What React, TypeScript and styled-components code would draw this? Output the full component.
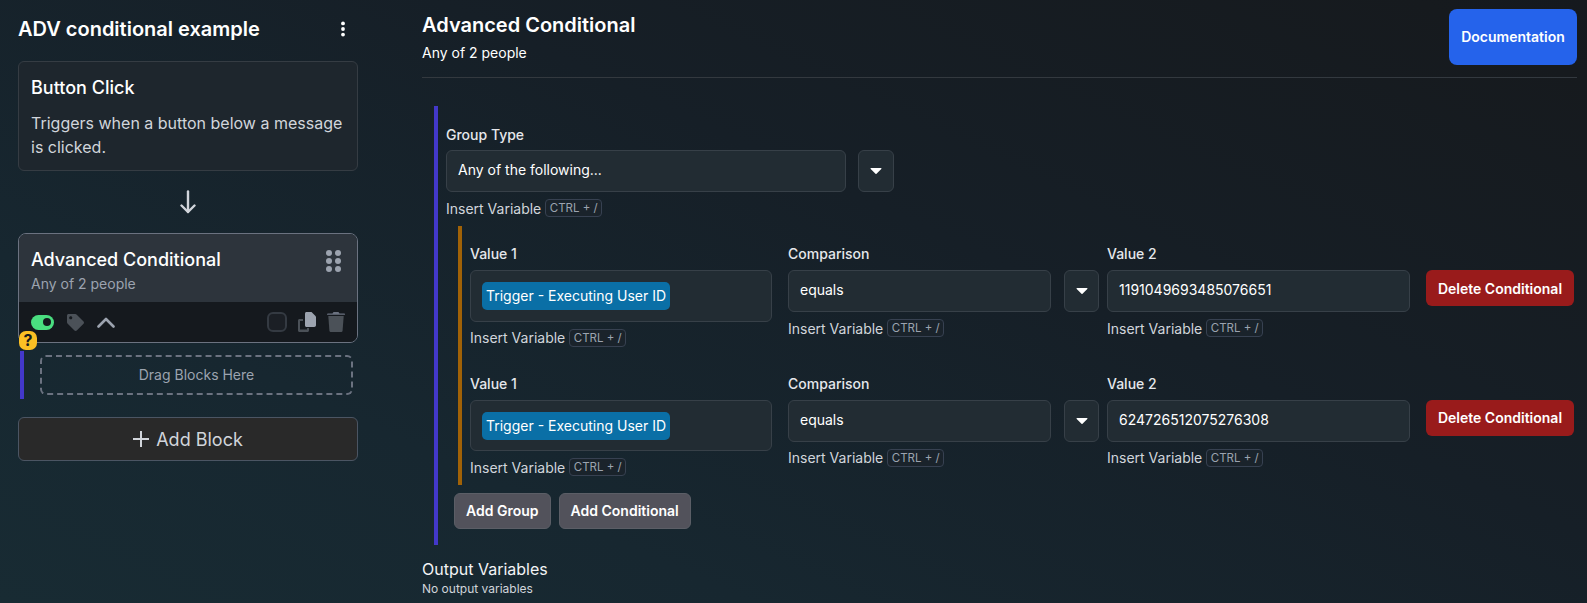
import React from 'react';
import styled, { createGlobalStyle } from 'styled-components';
import { FaTag } from 'react-icons/fa';

const GlobalStyle = createGlobalStyle`
  html, body {
    margin: 0;
    padding: 0;
    height: 100%;
    overflow: hidden;
  }
  body {
    font-family: Inter, "Liberation Sans", sans-serif;
    color: #fff;
    background: #171f26;
  }
  * {
    box-sizing: border-box;
  }
`;

const CaretIcon = () => (
  <svg width="12" height="8" viewBox="0 0 12 8">
    <path d="M1.2 1h9.6c.6 0 .9.7.5 1.1L6.5 6.8c-.3.3-.7.3-1 0L.7 2.1C.3 1.7.6 1 1.2 1z" fill="#fff" />
  </svg>
);

const InsertVariable = () => (
  <InsertRow>
    Insert Variable
    <Kbd>CTRL + /</Kbd>
  </InsertRow>
);

const ConditionalRow = ({ value }: { value: string }) => (
  <Row>
    <ValueOneField>
      <FieldLabel>Value 1</FieldLabel>
      <ChipInput>
        <Chip>Trigger - Executing User ID</Chip>
      </ChipInput>
      <InsertVariable />
    </ValueOneField>
    <ComparisonField>
      <FieldLabel>Comparison</FieldLabel>
      <SelectRow>
        <SelectBox>equals</SelectBox>
        <CaretButton>
          <CaretIcon />
        </CaretButton>
      </SelectRow>
      <InsertVariable />
    </ComparisonField>
    <ValueTwoField>
      <FieldLabel>Value 2</FieldLabel>
      <SelectBox>{value}</SelectBox>
      <InsertVariable />
    </ValueTwoField>
    <DeleteButton>Delete Conditional</DeleteButton>
  </Row>
);

const App = () => {
  return (
    <Page>
      <GlobalStyle />
      <Sidebar>
        <SidebarHeader>
          <SidebarTitle>ADV conditional example</SidebarTitle>
          <svg width="4" height="16" viewBox="0 0 4 16">
            <circle cx="2" cy="2.4" r="1.9" fill="#fff" />
            <circle cx="2" cy="8" r="1.9" fill="#fff" />
            <circle cx="2" cy="13.6" r="1.9" fill="#fff" />
          </svg>
        </SidebarHeader>
        <TriggerCard>
          <TriggerTitle>Button Click</TriggerTitle>
          <TriggerText>Triggers when a button below a message is clicked.</TriggerText>
        </TriggerCard>
        <ArrowWrap>
          <svg width="16" height="24" viewBox="0 0 16 24" fill="none" stroke="#d1d5db" strokeWidth="2.4" strokeLinecap="round" strokeLinejoin="round">
            <path d="M8 1.5v20.5" />
            <path d="M1.5 15.5 8 22l6.500-6.500" />
          </svg>
        </ArrowWrap>
        <BlockCard>
          <BlockHead>
            <BlockHeadText>
              <BlockTitle>Advanced Conditional</BlockTitle>
              <BlockSub>Any of 2 people</BlockSub>
            </BlockHeadText>
            <svg width="15" height="22" viewBox="0 0 15 22" fill="#9ca3af">
              <circle cx="3" cy="3" r="3" />
              <circle cx="12" cy="3" r="3" />
              <circle cx="3" cy="11" r="3" />
              <circle cx="12" cy="11" r="3" />
              <circle cx="3" cy="19" r="3" />
              <circle cx="12" cy="19" r="3" />
            </svg>
          </BlockHead>
          <BlockFoot>
            <Toggle />
            <FaTag size={17} color="#4b5158" />
            <svg width="18" height="11" viewBox="0 0 18 11" fill="none" stroke="#9ca3af" strokeWidth="2.6" strokeLinecap="round" strokeLinejoin="round">
              <path d="M1.500 9.500 9 2l7.500 7.500" />
            </svg>
            <FootRight>
              <CheckBox />
              <svg width="18" height="20" viewBox="0 0 18 20">
                <path d="M0 8.500C0 7.700.7 7 1.500 7H5v2H2v8.500h7V16h2v2.500c0 .8-.7 1.500-1.500 1.500h-8C.7 20 0 19.300 0 18.500z" fill="#4b5158" />
                <path d="M7 1.500C7 .7 7.700 0 8.500 0h5L18 4.500V13c0 1-.7 2-1.800 2H8.500c-.8 0-1.500-.7-1.500-1.500z" fill="#9ca3af" />
              </svg>
              <svg width="18" height="20" viewBox="0 0 18 20">
                <path d="M6.500 0h5l1 1.400H17c.6 0 1 .4 1 .9v.5H0v-.5c0-.5.4-.9 1-.9h4.500z" fill="#6b7280" />
                <path d="M1.300 4h15.400L15.600 18.400c-.1.9-.8 1.600-1.700 1.600H4.100c-.9 0-1.600-.7-1.700-1.600z" fill="#4b5158" />
              </svg>
            </FootRight>
          </BlockFoot>
          <HelpBadge>?</HelpBadge>
        </BlockCard>
        <Branch>
          <DropZone>Drag Blocks Here</DropZone>
        </Branch>
        <AddBlock>
          <svg width="16" height="16" viewBox="0 0 16 16" stroke="#d1d5db" strokeWidth="2">
            <path d="M8 0v16M0 8h16" />
          </svg>
          Add Block
        </AddBlock>
      </Sidebar>
      <Main>
        <MainHeader>
          <div>
            <MainTitle>Advanced Conditional</MainTitle>
            <MainSub>Any of 2 people</MainSub>
          </div>
          <DocsButton>Documentation</DocsButton>
        </MainHeader>
        <GroupBlock>
          <GroupLabel>Group Type</GroupLabel>
          <GroupSelectRow>
            <SelectBox>Any of the following...</SelectBox>
            <GroupCaretButton>
              <CaretIcon />
            </GroupCaretButton>
          </GroupSelectRow>
          <InsertVariable />
          <ConditionalList>
            <ConditionalRow value="1191049693485076651" />
            <ConditionalRow value="624726512075276308" />
          </ConditionalList>
          <GroupActions>
            <GrayButton>Add Group</GrayButton>
            <GrayButton>Add Conditional</GrayButton>
          </GroupActions>
        </GroupBlock>
        <OutputTitle>Output Variables</OutputTitle>
        <OutputText>No output variables</OutputText>
      </Main>
    </Page>
  );
};

export default App;

const Page = styled.div`
  display: flex;
  height: 603px;
  overflow: hidden;
  background: linear-gradient(25deg, #182b33 0%, #172730 26%, #161f27 60%, #161a1e 94%, #15191e 100%);
`;

const Sidebar = styled.div`
  width: 422px;
  flex-shrink: 0;
  padding: 15px 64px 0 18px;
`;

const SidebarHeader = styled.div`
  display: flex;
  align-items: center;
  justify-content: space-between;
  height: 28px;
  padding-right: 13px;
  margin-bottom: 18px;
`;

const SidebarTitle = styled.div`
  font-size: 20px;
  line-height: 28px;
  font-weight: 600;
`;

const TriggerCard = styled.div`
  height: 110px;
  padding: 12px;
  border: 1px solid #353c43;
  border-radius: 6px;
  background: #1e262d;
`;

const TriggerTitle = styled.div`
  font-size: 18px;
  line-height: 28px;
  font-weight: 500;
  margin-bottom: 9px;
`;

const TriggerText = styled.div`
  font-size: 16px;
  line-height: 24px;
  color: #d1d5db;
`;

const ArrowWrap = styled.div`
  display: flex;
  justify-content: center;
  padding: 19px 0 19px;
  height: 62px;
`;

const BlockCard = styled.div`
  position: relative;
  height: 110px;
  border: 1px solid #6b7280;
  border-radius: 8px;
  display: flex;
  flex-direction: column;
`;

const BlockHead = styled.div`
  display: flex;
  justify-content: space-between;
  height: 68px;
  padding: 12px 16px 0 12px;
  background: #2d343c;
  border-radius: 7px 7px 0 0;

  svg {
    margin-top: 4px;
  }
`;

const BlockHeadText = styled.div`
  display: flex;
  flex-direction: column;
`;

const BlockTitle = styled.div`
  font-size: 18px;
  line-height: 28px;
  font-weight: 500;
`;

const BlockSub = styled.div`
  font-size: 14px;
  line-height: 20px;
  color: #9ca3af;
`;

const BlockFoot = styled.div`
  flex: 1;
  display: flex;
  align-items: center;
  gap: 13px;
  padding: 0 12px;
  background: #15191e;
  border-radius: 0 0 7px 7px;
`;

const FootRight = styled.div`
  display: flex;
  align-items: center;
  gap: 11px;
  margin-left: auto;
`;

const Toggle = styled.div`
  position: relative;
  width: 23px;
  height: 15px;
  border-radius: 8px;
  background: #4ade80;

  &::after {
    content: '';
    position: absolute;
    right: 3px;
    top: 3.5px;
    width: 8px;
    height: 8px;
    border-radius: 50%;
    background: #15191e;
  }
`;

const CheckBox = styled.div`
  width: 20px;
  height: 20px;
  border: 2px solid #343a42;
  border-radius: 6px;
  background: #1b1f25;
`;

const HelpBadge = styled.div`
  position: absolute;
  left: 0;
  top: 97px;
  width: 18px;
  height: 19px;
  border-radius: 7px;
  background: #fbbf24;
  color: #15191e;
  font-size: 16px;
  font-weight: 700;
  line-height: 19px;
  text-align: center;
`;

const Branch = styled.div`
  margin: 8px 0 0 2px;
  padding: 4px 5px 4px 16px;
  border-left: 4px solid #4338ca;
`;

const DropZone = styled.div`
  height: 40px;
  padding-bottom: 2px;
  border: 2px dashed #6b7280;
  border-radius: 6px;
  display: flex;
  align-items: center;
  justify-content: center;
  font-size: 14px;
  color: #9ca3af;
`;

const AddBlock = styled.div`
  margin-top: 18px;
  height: 44px;
  border: 1px solid #4b5563;
  border-radius: 6px;
  background: #292929;
  display: flex;
  align-items: center;
  justify-content: center;
  gap: 7px;
  font-size: 18px;
  color: #d1d5db;
`;

const Main = styled.div`
  flex: 1;
  min-width: 0;
  padding: 9px 10px 0 0;
`;

const MainHeader = styled.div`
  display: flex;
  justify-content: space-between;
  height: 69px;
  padding-top: 0;
  border-bottom: 1px solid #33393f;
`;

const MainTitle = styled.div`
  font-size: 20px;
  line-height: 28px;
  font-weight: 600;
  margin-top: 2px;
`;

const MainSub = styled.div`
  font-size: 14px;
  line-height: 20px;
  margin-top: 4px;
`;

const DocsButton = styled.div`
  width: 128px;
  height: 56px;
  padding-bottom: 2px;
  border-radius: 8px;
  background: #2563eb;
  display: flex;
  align-items: center;
  justify-content: center;
  font-size: 14px;
  font-weight: 600;
`;

const GroupBlock = styled.div`
  margin: 28px 0 0 12px;
  padding: 18px 0 16px 8px;
  border-left: 4px solid #4338ca;
`;

const FieldLabel = styled.div`
  font-size: 14px;
  line-height: 20px;
  font-weight: 500;
  color: #e5e7eb;
  margin-bottom: 6px;
`;

const GroupLabel = styled(FieldLabel)`
  padding-top: 1px;
  margin-bottom: 5px;
`;

const SelectBox = styled.div`
  flex: 1;
  height: 42px;
  padding: 0 11px 3px;
  border: 1px solid #374048;
  border-radius: 6px;
  background: #222c33;
  display: flex;
  align-items: center;
  font-size: 14px;
  color: #fff;
`;

const CaretButton = styled.div`
  width: 35px;
  height: 42px;
  flex-shrink: 0;
  border: 1px solid #374048;
  border-radius: 6px;
  background: #222c33;
  display: flex;
  align-items: center;
  justify-content: center;
`;

const GroupCaretButton = styled(CaretButton)`
  width: 36px;
`;

const GroupSelectRow = styled.div`
  display: flex;
  gap: 12px;
  width: 448px;
`;

const SelectRow = styled.div`
  display: flex;
  gap: 13px;
`;

const InsertRow = styled.div`
  display: flex;
  align-items: center;
  gap: 4px;
  height: 18px;
  margin-top: 7px;
  font-size: 14px;
  color: #d1d5db;
`;

const Kbd = styled.span`
  height: 18px;
  padding: 0 3.5px;
  border: 1px solid #374151;
  border-radius: 4px;
  background: #1a232b;
  font-size: 11.5px;
  line-height: 16px;
  color: #9ca3af;
`;

const ConditionalList = styled.div`
  display: flex;
  flex-direction: column;
  gap: 27px;
  margin: 9px 0 0 12px;
  padding: 18px 0 9px 8px;
  border-left: 4px solid #a16207;
`;

const Row = styled.div`
  display: flex;
  align-items: flex-start;
`;

const ValueOneField = styled.div`
  width: 302px;
  margin-right: 16px;
`;

const ComparisonField = styled.div`
  width: 311px;
  margin-right: 8px;
`;

const ValueTwoField = styled.div`
  width: 303px;
  margin-right: 16px;
`;

const ChipInput = styled.div`
  height: 51.5px;
  padding: 11px;
  border: 1px solid #374048;
  border-radius: 6px;
  background: #222c33;
`;

const Chip = styled.div`
  display: inline-block;
  height: 28px;
  padding: 0 4px;
  border-radius: 5px;
  background: #0a6fa6;
  font-size: 14px;
  line-height: 28px;
  white-space: nowrap;
`;

const DeleteButton = styled.div`
  width: 148px;
  height: 36px;
  margin-top: 26px;
  border-radius: 6px;
  background: #991b1b;
  display: flex;
  align-items: center;
  justify-content: center;
  font-size: 14px;
  font-weight: 600;
`;

const GroupActions = styled.div`
  display: flex;
  gap: 8px;
  margin: 8px 0 0 8px;
`;

const GrayButton = styled.div`
  height: 36px;
  padding: 0 11px 1px;
  border: 1px solid #5b5e66;
  border-radius: 6px;
  background: #52525b;
  display: flex;
  align-items: center;
  font-size: 14px;
  font-weight: 600;
`;

const OutputTitle = styled.div`
  margin-top: 12px;
  font-size: 16px;
  line-height: 24px;
  color: #f3f4f6;
`;

const OutputText = styled.div`
  font-size: 12px;
  line-height: 16px;
  color: #d1d5db;
`;
